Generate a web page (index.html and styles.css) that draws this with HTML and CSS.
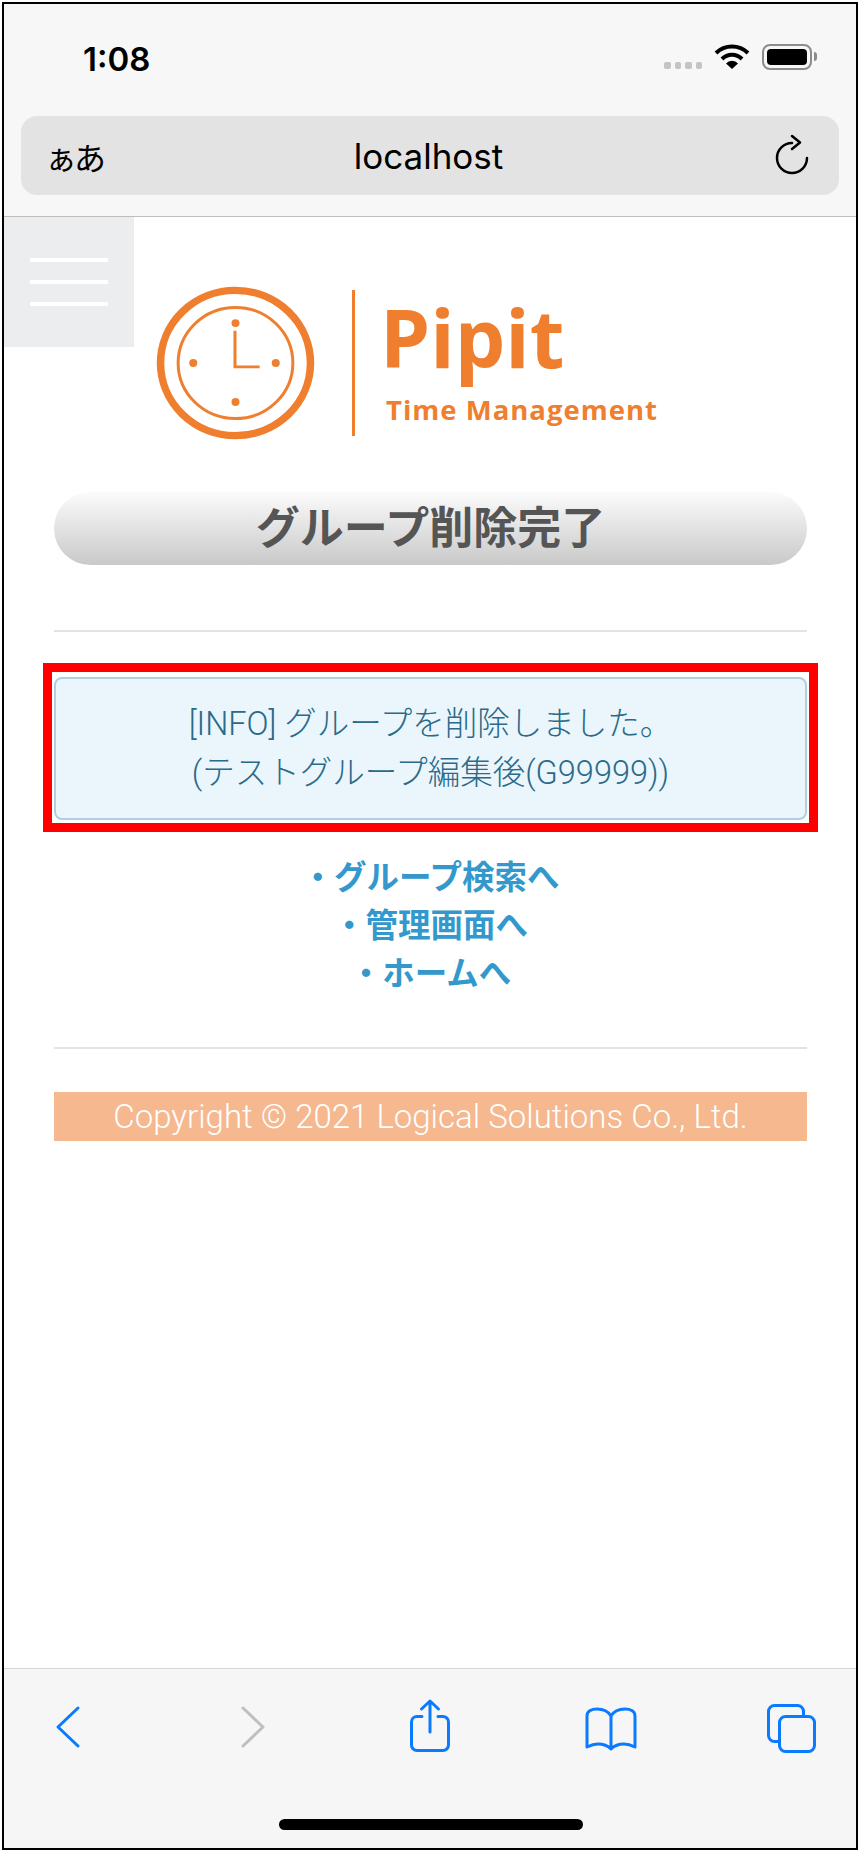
FILE: index.html
```html
<!DOCTYPE html>
<html lang="ja">
<head>
  <meta charset="UTF-8">
  <title>グループ削除完了</title>
  <link rel="stylesheet" href="styles.css">
</head>
<body>

<div class="phone">

  <header class="browser-top">
    <div class="status-bar">
      <span class="time">1:08</span>
      <div class="status-icons">
        <div class="signal"><i></i><i></i><i></i><i></i></div>
        <svg class="wifi" viewBox="0 0 36 26">
          <path d="M2 10A23 23 0 0 1 34 10" fill="none" stroke="#000" stroke-width="4"/>
          <path d="M8 16A14 14 0 0 1 28 16" fill="none" stroke="#000" stroke-width="4"/>
          <path d="M18 26L12 20.500A8 8 0 0 1 24 20.500Z" fill="#000"/>
        </svg>
        <div class="battery"><div class="battery-level"></div></div>
      </div>
    </div>
    <div class="url-bar">
      <span class="text-size">ぁあ</span>
      <span class="url">localhost</span>
      <svg class="reload" viewBox="0 0 40 44">
        <path d="M20 12A15 15 0 1 0 35 27" fill="none" stroke="#000" stroke-width="2.500" stroke-linecap="round"/>
        <path d="M20 5L28 11.500L20 18" fill="none" stroke="#000" stroke-width="2.500" stroke-linecap="round" stroke-linejoin="round"/>
      </svg>
    </div>
  </header>

  <main class="page">
    <button class="menu-button" type="button" aria-label="メニュー"><span></span><span></span><span></span></button>

    <div class="logo">
      <svg class="logo-clock" viewBox="0 0 160 160" preserveAspectRatio="none">
        <circle cx="80" cy="80" r="74.500" fill="none" stroke="#f07e2f" stroke-width="7.500"/>
        <circle cx="80" cy="80" r="57" fill="none" stroke="#f07e2f" stroke-width="3"/>
        <circle cx="80" cy="39" r="4" fill="#f07e2f"/>
        <circle cx="80" cy="120" r="4" fill="#f07e2f"/>
        <circle cx="38" cy="80" r="4" fill="#f07e2f"/>
        <circle cx="120" cy="80" r="4" fill="#f07e2f"/>
        <path d="M79.500 47V84H104" fill="none" stroke="#f07e2f" stroke-width="3"/>
      </svg>
      <div class="logo-divider"></div>
      <div class="logo-text">
        <div class="logo-name">Pipit</div>
        <div class="logo-sub">Time Management</div>
      </div>
    </div>

    <div class="content">
      <h1 class="page-title">グループ削除完了</h1>
      <hr>
      <div class="highlight">
        <div class="info-box">
          [INFO] グループを削除しました。<br>
          (テストグループ編集後(G99999))
        </div>
      </div>
      <ul class="links">
        <li><a href="#">・グループ検索へ</a></li>
        <li><a href="#">・管理画面へ</a></li>
        <li><a href="#">・ホームへ</a></li>
      </ul>
      <hr>
      <footer class="copyright">Copyright © 2021 Logical Solutions Co., Ltd.</footer>
    </div>
  </main>

  <nav class="browser-bottom">
    <svg class="nav-icon back" viewBox="0 0 26 44">
      <path d="M23 3L3 22L23 41" fill="none" stroke="#0a7aff" stroke-width="3" stroke-linecap="round" stroke-linejoin="round"/>
    </svg>
    <svg class="nav-icon forward" viewBox="0 0 26 44">
      <path d="M3 3L23 22L3 41" fill="none" stroke="#bfbfbf" stroke-width="3" stroke-linecap="round" stroke-linejoin="round"/>
    </svg>
    <svg class="nav-icon share" viewBox="0 0 46 56">
      <path d="M15 18.500H10a5.500 5.500 0 0 0-5.500 5.500v23a5.500 5.500 0 0 0 5.500 5.500h26a5.500 5.500 0 0 0 5.500-5.500v-23a5.500 5.500 0 0 0-5.500-5.500H31" fill="none" stroke="#0a7aff" stroke-width="3" stroke-linecap="round"/>
      <path d="M23 34V3M14.500 11L23 3L31.500 11" fill="none" stroke="#0a7aff" stroke-width="3" stroke-linecap="round" stroke-linejoin="round"/>
    </svg>
    <svg class="nav-icon book" viewBox="0 0 56 46">
      <path d="M28 11C25 6 20 4 14 4C9 4 4 6 4 11V42C8 40 11 39 15 39C20 39 25 41 28 44C31 41 36 39 41 39C45 39 48 40 52 42V11C52 6 47 4 42 4C36 4 31 6 28 11V44" fill="none" stroke="#0a7aff" stroke-width="3" stroke-linejoin="round"/>
    </svg>
    <svg class="nav-icon tabs" viewBox="0 0 52 52">
      <rect x="3.500" y="3.500" width="35" height="36" rx="6" fill="none" stroke="#0a7aff" stroke-width="3"/>
      <rect x="14.500" y="14.500" width="35" height="35" rx="6" fill="#f6f6f6" stroke="#0a7aff" stroke-width="3"/>
    </svg>
    <div class="home-indicator"></div>
  </nav>

</div>

</body>
</html>
```

FILE: styles.css
```css
* {
  box-sizing: border-box;
}

body {
  margin: 0;
  padding: 2px;
  background: #fff;
  font-family: "Liberation Sans", "Noto Sans CJK JP", sans-serif;
}

.phone {
  display: flex;
  flex-direction: column;
  height: 1848px;
  border: 2px solid #000;
}

/* safari top */
.browser-top {
  height: 213px;
  background: #f7f7f7;
  border-bottom: 1px solid #bdbdbd;
  padding: 0 17px;
}

.status-bar {
  display: flex;
  justify-content: space-between;
  height: 112px;
  padding: 36px 27px 0 62px;
}

.time {
  font-family: "Inter", sans-serif;
  font-size: 33px;
  font-weight: 600;
  line-height: 38px;
  color: #000;
}

.status-icons {
  display: flex;
  align-items: flex-start;
}

.signal {
  display: flex;
  gap: 4px;
  margin: 22px 12px 0 0;
}

.signal i {
  width: 6.500px;
  height: 7px;
  border-radius: 2px;
  background: #c4c4c4;
}

.wifi {
  width: 36px;
  height: 26px;
  margin: 3px 12px 0 0;
}

.battery {
  position: relative;
  width: 50px;
  height: 26px;
  margin-top: 4px;
  padding: 3px;
  border: 2px solid #8c8c8c;
  border-radius: 8px;
}

.battery::after {
  content: "";
  position: absolute;
  right: -7px;
  top: 6px;
  width: 3px;
  height: 9px;
  border-radius: 0 3px 3px 0;
  background: #8c8c8c;
}

.battery-level {
  height: 100%;
  border-radius: 4px;
  background: #000;
}

.url-bar {
  display: grid;
  grid-template-columns: 1fr auto 1fr;
  align-items: center;
  height: 79px;
  padding: 0 27px 0 24px;
  background: #e3e3e3;
  border-radius: 16px;
}

.text-size {
  font-size: 32px;
  letter-spacing: -3px;
  color: #000;
}

.url {
  font-family: "Inter", sans-serif;
  font-size: 35px;
  color: #000;
}

.reload {
  justify-self: end;
  width: 40px;
  height: 44px;
  margin-top: -6px;
}

/* page content */
.page {
  position: relative;
  flex: 1;
  background: #fff;
}

.menu-button {
  position: absolute;
  top: 0;
  left: 0;
  display: flex;
  flex-direction: column;
  gap: 18px;
  width: 130px;
  height: 130px;
  padding: 41px 26px 0;
  border: none;
  background: #ecedef;
}

.menu-button span {
  display: block;
  width: 78px;
  height: 4px;
  background: #fff;
}

.logo {
  display: flex;
  align-items: flex-start;
  padding: 68px 0 0 151px;
  height: 275px;
}

.logo-clock {
  width: 161px;
  height: 156px;
}

.logo-divider {
  width: 3px;
  height: 146px;
  margin: 5px 0 0 36px;
  background: #f07e2f;
}

.logo-text {
  margin-left: 25px;
  color: #f07e2f;
  font-family: "Open Sans", sans-serif;
}

.logo-name {
  font-size: 80px;
  font-weight: 700;
  line-height: 100px;
  margin-top: 2px;
}

.logo-sub {
  font-size: 27.500px;
  font-weight: 700;
  line-height: 36px;
  margin: 5px 0 0 6px;
  letter-spacing: 1px;
}

.content {
  padding: 0 49px 0 50px;
}

.page-title {
  margin: 0;
  height: 73px;
  border-radius: 37px;
  background: linear-gradient(#fbfbfb, #c9c9c9);
  color: #555;
  font-size: 44px;
  font-weight: 700;
  line-height: 73px;
  text-align: center;
}

hr {
  height: 2px;
  margin: 65px 0 0;
  border: none;
  background: #e3e3e3;
}

.highlight {
  margin: 31px -11px 0;
  padding: 5px 2px 3px;
  border: 9px solid #f00;
}

.info-box {
  height: 143px;
  padding-top: 21px;
  border: 2px solid #b0cfdf;
  border-radius: 8px;
  background: #ebf6fc;
  color: #2a6a8a;
  font-family: "Roboto", "Noto Sans CJK JP", sans-serif;
  font-size: 32.500px;
  font-weight: 300;
  line-height: 49px;
  text-align: center;
}

.links {
  margin: 22px 0 0;
  padding: 0;
  list-style: none;
  text-align: center;
}

.links li {
  font-size: 32.500px;
  font-weight: 700;
  line-height: 48px;
}

.links a {
  color: #3399cc;
  text-decoration: none;
}

.links + hr {
  margin-top: 49px;
}

.copyright {
  height: 49px;
  margin-top: 43px;
  background: #f5b88f;
  color: #fff;
  font-family: "Roboto", sans-serif;
  font-size: 33px;
  font-weight: 300;
  line-height: 49px;
  text-align: center;
}

/* safari bottom */
.browser-bottom {
  position: relative;
  height: 180px;
  background: #f6f6f6;
  border-top: 1px solid #d6d6d6;
}

.nav-icon {
  position: absolute;
}

.back {
  left: 51px;
  top: 36px;
  width: 26px;
  height: 44px;
}

.forward {
  left: 236px;
  top: 36px;
  width: 26px;
  height: 44px;
}

.share {
  left: 403px;
  top: 29px;
  width: 46px;
  height: 56px;
}

.book {
  left: 579px;
  top: 36px;
  width: 56px;
  height: 46px;
}

.tabs {
  left: 761px;
  top: 33px;
  width: 52px;
  height: 52px;
}

.home-indicator {
  position: absolute;
  left: 275px;
  top: 150px;
  width: 304px;
  height: 11px;
  border-radius: 6px;
  background: #000;
}
```
